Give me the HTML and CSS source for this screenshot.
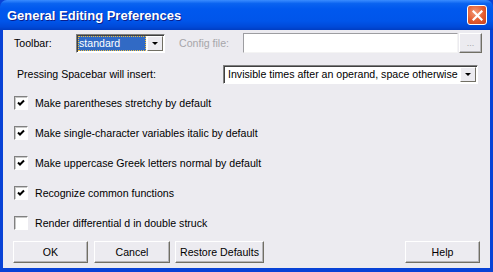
FILE: index.html
```html
<!DOCTYPE html>
<html lang="en">
<head>
    <meta charset="utf-8">
    <title>General Editing Preferences</title>
    <link rel="stylesheet" href="styles.css">
</head>
<body>
    <div class="window">
        <div class="titlebar">
            <span class="title">General Editing Preferences</span>
            <span class="close">
                <svg width="11" height="11" viewBox="0 0 11 11"><path d="M1.5 1.5 L9.5 9.5 M9.5 1.5 L1.5 9.5" stroke="#fff" stroke-width="2.2" stroke-linecap="square"/></svg>
            </span>
        </div>
        <div class="content">
            <div class="row row-toolbar">
                <span class="label toolbar-label">Toolbar:</span>
                <div class="combo combo-toolbar">
                    <span class="combo-value selected">standard</span>
                    <span class="drop"><i class="arrow"></i></span>
                </div>
                <span class="label disabled config-label">Config file:</span>
                <div class="textbox"></div>
                <span class="btn btn-browse">...</span>
            </div>
            <div class="row row-space">
                <span class="label space-label">Pressing Spacebar will insert:</span>
                <div class="combo combo-space">
                    <span class="combo-value">Invisible times after an operand, space otherwise</span>
                    <span class="drop"><i class="arrow"></i></span>
                </div>
            </div>
            <div class="checks">
                <label class="check"><span class="box checked"></span>Make parentheses stretchy by default</label>
                <label class="check"><span class="box checked"></span>Make single-character variables italic by default</label>
                <label class="check"><span class="box checked"></span>Make uppercase Greek letters normal by default</label>
                <label class="check"><span class="box checked"></span>Recognize common functions</label>
                <label class="check"><span class="box"></span>Render differential d in double struck</label>
            </div>
            <div class="buttons">
                <span class="btn btn-ok">OK</span>
                <span class="btn btn-cancel">Cancel</span>
                <span class="btn btn-restore">Restore Defaults</span>
                <span class="spacer"></span>
                <span class="btn btn-help">Help</span>
            </div>
        </div>
    </div>
</body>
</html>
```

FILE: styles.css
```css
* {
    box-sizing: border-box;
}

body {
    margin: 0;
    width: 493px;
    height: 272px;
    overflow: hidden;
    font-family: "Liberation Sans", Arial, sans-serif;
    font-size: 10.6px;
    color: #000;
}

:root {
    --face: #ecebf0;
    --frame: #0842d6;
    --dark: #716f64;
}

.window {
    width: 493px;
    height: 272px;
    display: flex;
    flex-direction: column;
    background: var(--frame);
}

.titlebar {
    height: 30px;
    display: flex;
    align-items: center;
    justify-content: space-between;
    padding: 0 6px 0 7px;
    border-radius: 7px 7px 0 0;
    background: linear-gradient(to bottom,
            #3a8cff 0%,
            #0a63f0 12%,
            #0058ee 30%,
            #0055ea 70%,
            #0049d8 90%,
            #003dc2 100%);
}

.title {
    color: #fff;
    font-weight: bold;
    font-size: 13px;
    text-shadow: 1px 1px 0 #0a1e8c;
}

.close {
    width: 20px;
    height: 20px;
    display: flex;
    align-items: center;
    justify-content: center;
    border: 1px solid #fff;
    border-radius: 3px;
    background: radial-gradient(circle at 40% 35%, #f29a78 0%, #e35a2e 55%, #c8401c 100%);
}

.content {
    flex: 1;
    margin: 0 3px 4px 3px;
    padding: 3px 8px 0 11px;
    background: var(--face);
    display: flex;
    flex-direction: column;
}

.row {
    display: flex;
    align-items: center;
    height: 20px;
}

.label {
    white-space: nowrap;
}

.disabled {
    color: #a7a6aa;
}

.toolbar-label {
    width: 62px;
}

.config-label {
    width: 64px;
    margin-left: 14px;
}

.space-label {
    margin-left: 3px;
    width: 206px;
}

.row-space {
    margin-top: 11px;
}

.combo {
    display: flex;
    align-items: center;
    height: 19px;
    padding: 1px;
    background: #fff;
    border-top: 1px solid #808080;
    border-left: 1px solid #808080;
    border-right: 1px solid #fff;
    border-bottom: 1px solid #fff;
    box-shadow: inset 1px 1px 0 #404040;
}

.combo-toolbar {
    width: 89px;
}

.combo-space {
    width: 255px;
}

.combo-value {
    flex: 1;
    height: 100%;
    display: flex;
    align-items: center;
    padding-left: 3px;
    white-space: nowrap;
    overflow: hidden;
}

.combo-value.selected {
    background: #316ac5;
    color: #fff;
    padding-left: 1px;
    outline: 1px dotted #f0c040;
    outline-offset: -1px;
}

.drop {
    width: 16px;
    height: 15px;
    margin-left: 1px;
    display: flex;
    align-items: center;
    justify-content: center;
    background: var(--face);
    border-top: 1px solid #fff;
    border-left: 1px solid #fff;
    border-right: 1px solid var(--dark);
    border-bottom: 1px solid var(--dark);
}

.arrow {
    width: 0;
    height: 0;
    border-left: 3px solid transparent;
    border-right: 3px solid transparent;
    border-top: 3px solid #000;
    margin-top: 1px;
}

.textbox {
    width: 215px;
    height: 20px;
    background: #fff;
    border-top: 1px solid #9d9da1;
    border-left: 1px solid #9d9da1;
    border-right: 1px solid #f4f4f4;
    border-bottom: 1px solid #f4f4f4;
}

.btn {
    display: flex;
    align-items: center;
    justify-content: center;
    height: 22px;
    background: var(--face);
    border-top: 1px solid #fff;
    border-left: 1px solid #fff;
    border-right: 1px solid var(--dark);
    border-bottom: 1px solid var(--dark);
    box-shadow: inset -1px -1px 0 #b5b4b8;
    white-space: nowrap;
}

.btn-browse {
    width: 23px;
    height: 20px;
    margin-left: 1px;
    color: #a7a6aa;
    font-size: 9px;
    align-items: flex-end;
    padding-bottom: 4px;
}

.checks {
    display: flex;
    flex-direction: column;
    margin-top: 4px;
}

.check {
    height: 30px;
    display: flex;
    align-items: center;
    white-space: nowrap;
}

.box {
    width: 14px;
    height: 14px;
    margin-right: 7px;
    background: #fff;
    border-top: 1px solid #808080;
    border-left: 1px solid #808080;
    border-right: 1px solid #fff;
    border-bottom: 1px solid #fff;
    box-shadow: inset 1px 1px 0 #c8c8c8;
}

.box.checked {
    background: #fff url("data:image/svg+xml,%3Csvg xmlns='http://www.w3.org/2000/svg' width='12' height='12' viewBox='0 0 12 12'%3E%3Cpath d='M3 5.5 L5 7.5 L9 3.5' fill='none' stroke='%23000' stroke-width='2'/%3E%3C/svg%3E") center no-repeat;
}

.buttons {
    display: flex;
    margin-top: 3px;
    margin-left: -1px;
}

.btn-ok {
    width: 75px;
}

.btn-cancel {
    width: 76px;
    margin-left: 6px;
}

.btn-restore {
    width: 89px;
    margin-left: 5px;
}

.spacer {
    flex: 1;
}

.btn-help {
    width: 75px;
    margin-right: 2px;
}
```
